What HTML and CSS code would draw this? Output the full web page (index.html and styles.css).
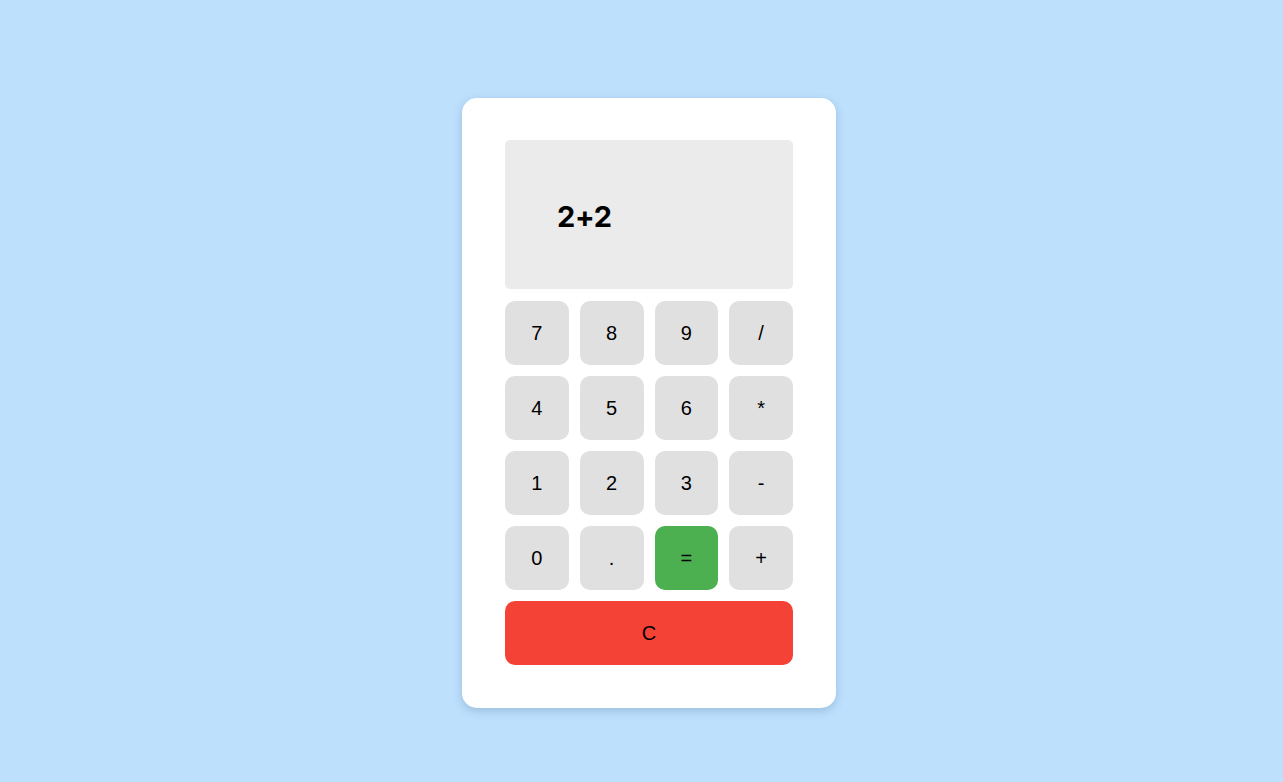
FILE: index.html
```html
<!DOCTYPE html>
<html lang="en">
<head>
<meta charset="utf-8">
<title>Calculator</title>
<link rel="stylesheet" href="styles.css">
</head>
<body>
<div class="calculator">
  <div class="display">2+2</div>
  <div class="keys">
    <button class="key">7</button>
    <button class="key">8</button>
    <button class="key">9</button>
    <button class="key">/</button>
    <button class="key">4</button>
    <button class="key">5</button>
    <button class="key">6</button>
    <button class="key">*</button>
    <button class="key">1</button>
    <button class="key">2</button>
    <button class="key">3</button>
    <button class="key">-</button>
    <button class="key">0</button>
    <button class="key">.</button>
    <button class="key equals">=</button>
    <button class="key">+</button>
    <button class="key clear">C</button>
  </div>
</div>
</body>
</html>
```
FILE: styles.css
```css
html, body {
  margin: 0;
  padding: 0;
}
body {
  background: #bde0fd;
  min-height: 100vh;
  box-sizing: border-box;
  display: flex;
  justify-content: center;
  align-items: flex-start;
  padding: 98px 0 0 15px;
  font-family: "Liberation Sans", Arial, sans-serif;
}
.calculator {
  width: 374px;
  box-sizing: border-box;
  padding: 42px 43px 43px 43px;
  background: #ffffff;
  border-radius: 15px;
  box-shadow: 0 3px 10px rgba(60, 100, 140, 0.28);
}
.display {
  height: 149px;
  box-sizing: border-box;
  background: #ebebeb;
  border-radius: 5px;
  padding-left: 52px;
  display: flex;
  align-items: center;
  font-family: "Inter", "Liberation Sans", sans-serif;
  font-weight: 700;
  font-size: 29px;
  letter-spacing: -0.3px;
  color: #000;
  padding-top: 3px;
}
.keys {
  margin-top: 12px;
  display: grid;
  grid-template-columns: repeat(4, 1fr);
  grid-auto-rows: 64px;
  gap: 11px 11px;
}
.key {
  border: none;
  border-radius: 10px;
  background: #e0e0e0;
  font-family: "Liberation Sans", Arial, sans-serif;
  font-size: 20px;
  color: #000;
  padding: 0;
  margin: 0;
}
.equals {
  background: #4caf50;
}
.clear {
  grid-column: 1 / -1;
  background: #f44336;
}
```
